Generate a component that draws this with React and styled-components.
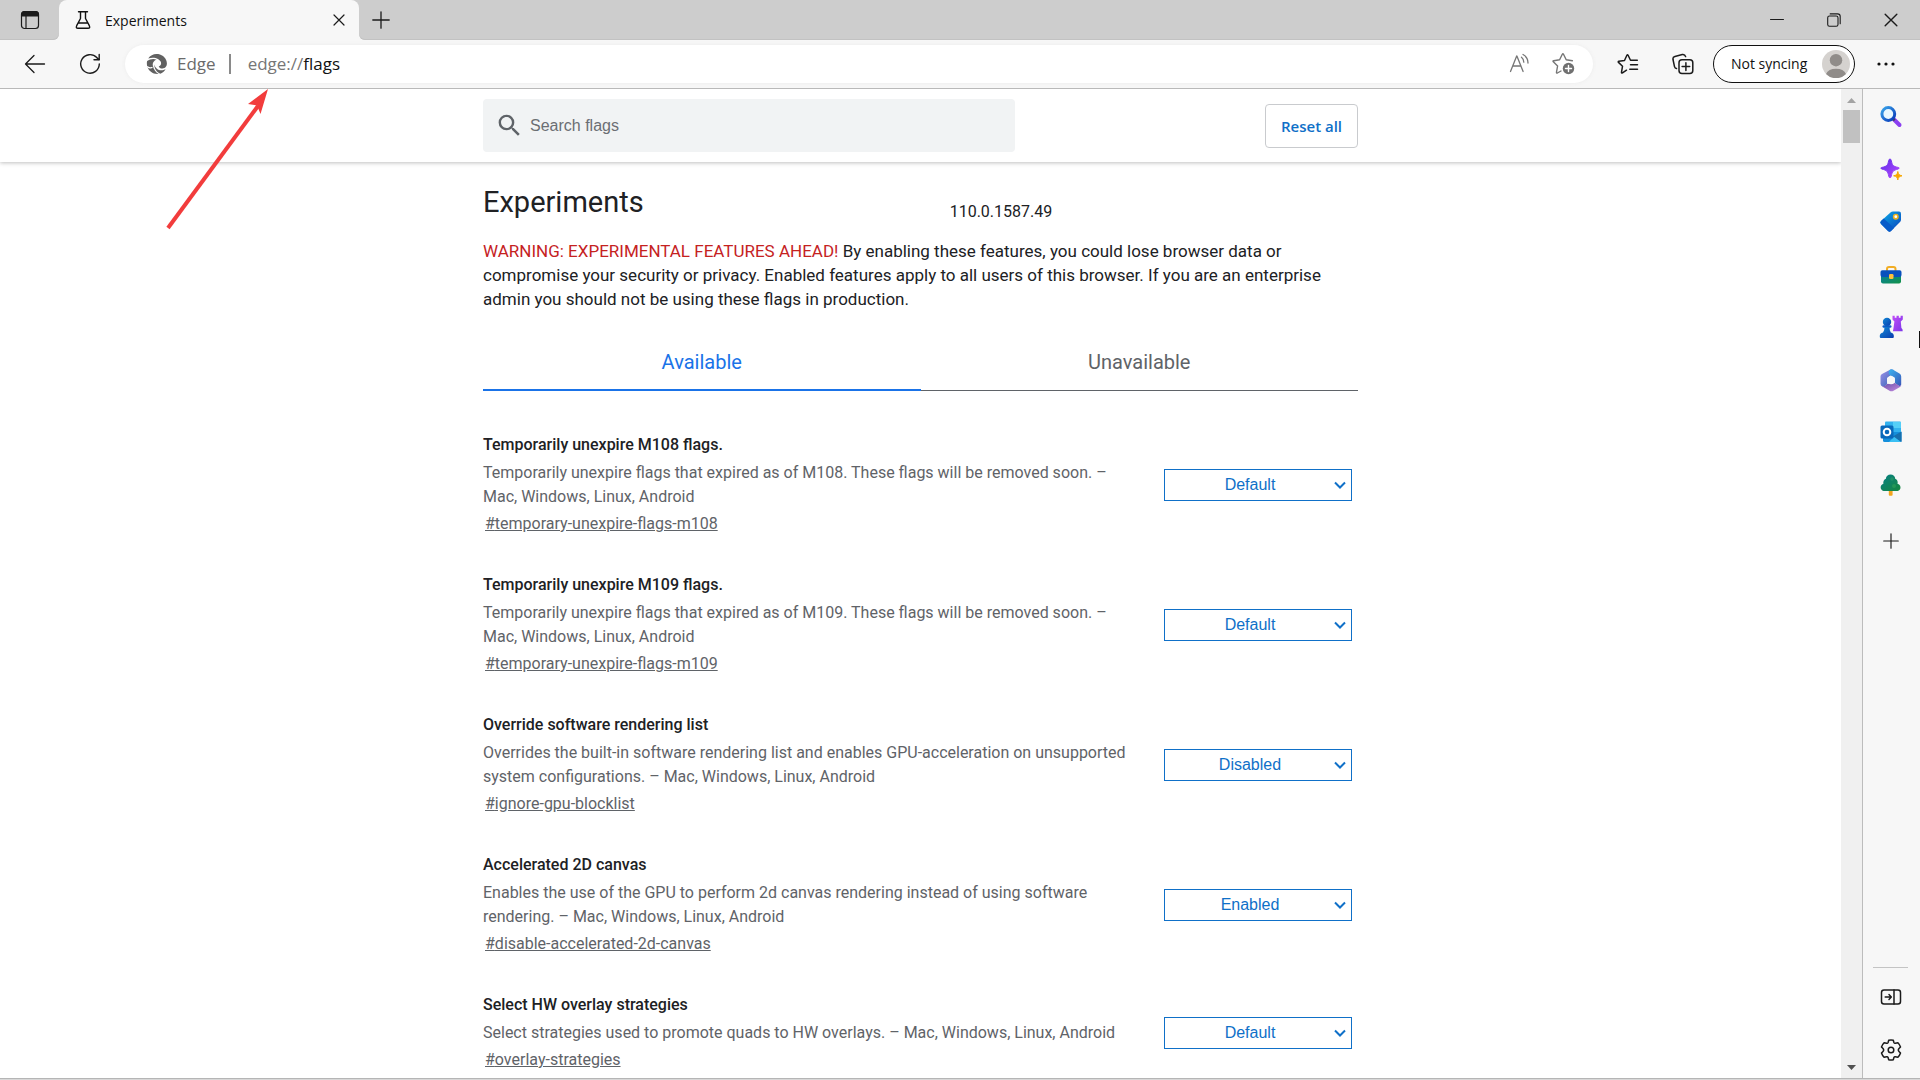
import React, { useState } from "react"
import styled, { createGlobalStyle } from "styled-components";
import { MdSearch } from "react-icons/md";

const GlobalStyle = createGlobalStyle`
* {
box-sizing: border-box;
}
body {
margin: 0;
overflow: hidden;
background: #fff;
color: #202124;
font-family: Roboto, "Liberation Sans", sans-serif;
}
button, input, select {
font: inherit;
color: inherit;
}
h1, h2, p {
margin: 0;
font-weight: 400;
}
`
const Window = styled.div`
position: relative;
height: 100vh;
display: flex;
flex-direction: column;
background: #f7f7f7;
border-bottom: 1px solid #d8d8d8;
`
const TabStrip = styled.div`
display: flex;
height: 40px;
color: #111;
font-family: "Open Sans", "Noto Sans", sans-serif;
`
const StripStart = styled.div`
width: 59px;
display: flex;
align-items: center;
justify-content: center;
background: #cdcdcd;
border-radius: 0 0 6px 0;
box-shadow: inset 0 -1px 0 #c2c2c2;
`
const TabShell = styled.div`
width: 300px;
display: flex;
background: linear-gradient(#cdcdcd 12px, #f7f7f7 12px);
`
const BrowserTab = styled.div`
flex: 1;
display: flex;
align-items: center;
gap: 12px;
padding: 0 8px 0 14px;
background: #f7f7f7;
border-radius: 8px 8px 0 0;
font-size: 14px;
`
const BrowserTabTitle = styled.span`
flex: 1;
`
const StripEnd = styled.div`
flex: 1;
display: flex;
align-items: center;
padding: 0 1px 0 10px;
background: #cdcdcd;
border-radius: 0 0 0 6px;
box-shadow: inset 0 -1px 0 #c2c2c2;
`
const WindowButtons = styled.div`
display: flex;
margin-left: auto;
`
const IconButton = styled.button`
display: flex;
align-items: center;
justify-content: center;
flex: none;
width: ${(props) => props.$width || 24}px;
height: ${(props) => props.$height || 24}px;
padding: 0;
border: none;
background: none;
color: ${(props) => props.$color || "#1b1b1b"};
`
const Toolbar = styled.div`
display: flex;
align-items: center;
height: 49px;
padding: 5px 4px 6px 7px;
border-bottom: 1px solid #b9b9b9;
font-family: "Open Sans", "Noto Sans", sans-serif;
`
const AddressBar = styled.div`
flex: 1;
display: flex;
align-items: center;
height: 38px;
margin: 0 7px 0 8px;
padding: 0 7px 0 21px;
background: #fff;
border-radius: 19px;
box-shadow: 0 0 4px #ececec;
font-size: 17px;
`
const SiteBadge = styled.div`
display: flex;
align-items: center;
gap: 9px;
padding-right: 13px;
color: #6b6b6b;
`
const SiteDivider = styled.div`
width: 2px;
height: 20px;
margin-right: 17px;
background: #8a8a8a;
`
const Url = styled.div`
flex: 1;
color: #767676;
`
const UrlPath = styled.span`
color: #111;
`
const ProfileButton = styled.button`
display: flex;
align-items: center;
justify-content: space-between;
width: 142px;
height: 38px;
margin-left: 3px;
padding: 0 4px 0 17px;
border: 1px solid #111;
border-radius: 19px;
background: #fff;
color: #111;
font-size: 14px;
white-space: nowrap;
`
const Main = styled.div`
flex: 1;
min-height: 0;
display: flex;
border-bottom: 1px solid #b5b5b5;
`
const Page = styled.main`
flex: 1;
background: #fff;
overflow: hidden;
`
const PageHeader = styled.div`
display: flex;
justify-content: center;
height: 73px;
box-shadow: 0 1px 4px rgba(0, 0, 0, 0.25);
`
const HeaderInner = styled.div`
display: flex;
align-items: center;
justify-content: space-between;
width: 875px;
`
const SearchBox = styled.label`
display: flex;
align-items: center;
gap: 4px;
width: 532px;
height: 53px;
padding-left: 12px;
background: #f1f3f4;
border-radius: 4px;
color: #5f6368;
`
const SearchInput = styled.input`
flex: 1;
border: none;
outline: none;
background: none;
font-family: "Liberation Sans", Arial, sans-serif;
font-size: 16px;
&::placeholder {
color: #6b6e73;
opacity: 1;
}
`
const ResetButton = styled.button`
width: 93px;
height: 44px;
padding: 0;
background: #fff;
border: 1px solid #c9cbce;
border-radius: 4px;
color: #0f70c8;
font-family: "Open Sans", "Noto Sans", sans-serif;
font-size: 15px;
font-weight: 600;
`
const Content = styled.div`
width: 875px;
margin: 0 auto;
padding-top: 20px;
`
const TitleRow = styled.div`
display: grid;
grid-template-columns: 8fr 7fr;
align-items: end;
`
const Title = styled.h1`
font-size: 29px;
line-height: 40px;
`
const Version = styled.span`
font-size: 16px;
line-height: 20px;
`
const Blurb = styled.p`
margin-top: 17px;
font-size: 17px;
line-height: 24px;
`
const Warning = styled.span`
color: #c5221f;
`
const Tabs = styled.div`
display: flex;
margin: 21px 0 42px;
`
const Tab = styled.button`
flex: 1;
height: 59px;
padding: 0;
border: none;
background: none;
box-shadow: inset 0 ${(props) => (props.$selected ? "-2px" : "-1px")} 0 ${(props) => (props.$selected ? "#1a73e8" : "#5f6368")};
color: ${(props) => (props.$selected ? "#1a73e8" : "#5f6368")};
font-size: 20px;
`
const FlagList = styled.div`
display: flex;
flex-direction: column;
gap: 37px;
`
const Flag = styled.div`
display: flex;
align-items: center;
justify-content: space-between;
padding-right: 6px;
`
const FlagText = styled.div`
width: 656px;
font-size: 16px;
line-height: 24px;
`
const FlagName = styled.h2`
font-size: 16px;
font-weight: 500;
line-height: 24px;
`
const FlagDescription = styled.p`
margin: 4px 0 3px;
color: #5f6368;
`
const FlagLink = styled.a`
margin-left: 2px;
color: #5f6368;
`
const SelectBox = styled.div`
display: grid;
align-items: center;
width: 188px;
color: #0f70c8;
& > * {
grid-area: 1 / 1;
}
& > svg {
justify-self: end;
margin-right: 6px;
pointer-events: none;
}
`
const Select = styled.select`
width: 100%;
height: 32px;
padding: 0 16px 0 0;
appearance: none;
background: #fff;
border: 1px solid #0f70c8;
border-radius: 0;
font-family: "Liberation Sans", Arial, sans-serif;
font-size: 16px;
text-align: center;
text-align-last: center;
`
const ScrollTrack = styled.div`
display: flex;
flex-direction: column;
align-items: center;
justify-content: space-between;
width: 21px;
padding: 9px 0 8px;
background: #f0f0f0;
`
const ScrollTop = styled.div`
display: flex;
flex-direction: column;
align-items: center;
gap: 7px;
`
const ScrollThumb = styled.div`
width: 17px;
height: 33px;
background: #c1c1c1;
`
const Sidebar = styled.aside`
display: flex;
flex-direction: column;
align-items: center;
width: 58px;
padding: 2px 2px 2px 0;
border-left: 1px solid #bcbcbc;
`
const SidebarApps = styled.nav`
display: grid;
grid-template-rows: repeat(8, 1fr);
height: 420px;
`
const SidebarBottom = styled.div`
display: flex;
flex-direction: column;
align-items: center;
width: 35px;
margin-top: auto;
padding-top: 2px;
border-top: 1px solid #c4c4c4;
`
const Pointer = styled.svg`
position: absolute;
left: 160px;
top: 84px;
pointer-events: none;
`
const Caret = styled.div`
position: absolute;
right: 0;
top: 331px;
width: 1px;
height: 17px;
background: #111;
`

const Svg = ({ size = 20, box, children, ...rest }) => (
    <svg width={size} height={size} viewBox={`0 0 ${box || size} ${box || size}`} fill="none" stroke="currentColor"
        strokeLinecap="round" strokeLinejoin="round" aria-hidden="true" {...rest}>
        {children}
    </svg>
)

const TabMenuIcon = () => (
    <Svg>
        <rect x="1.5" y="1.5" width="17" height="17" rx="3" strokeWidth="1.2" />
        <path d="M1 6.5V4.5A3.5 3.5 0 0 1 4.500 1h11A3.500 3.500 0 0 1 19 4.500v2z" fill="currentColor" stroke="none" />
        <path d="M6 6v12.500" strokeWidth="1.2" />
    </Svg>
)
const FlaskIcon = () => (
    <Svg strokeWidth="1.4">
        <path d="M5.500 1.700h9M7.500 2v6.500L3.700 15.700q-1.200 2.600 1.300 2.600h10q2.500 0 1.300-2.600L12.500 8.500V2M5.300 13h9.400" />
    </Svg>
)
const CloseIcon = ({ size = 12 }) => (
    <Svg size={size} box={12} strokeWidth="1.2"><path d="M1 1l10 10M11 1L1 11" /></Svg>
)
const PlusIcon = ({ size = 18 }) => (
    <Svg size={size} box={18} strokeWidth="1.3"><path d="M9 .8v16.400M.8 9h16.400" /></Svg>
)
const MinimizeIcon = () => <Svg size={14} strokeWidth="1"><path d="M.5 6.500h13" /></Svg>
const RestoreIcon = () => (
    <Svg size={14} strokeWidth="1.1">
        <rect x=".7" y="3" width="10.300" height="10.300" rx="1.8" />
        <path d="M3.200 .9h7.300a2.700 2.700 0 0 1 2.700 2.700v7.200" />
    </Svg>
)
const BackIcon = () => (
    <Svg size={22} strokeWidth="1.3"><path d="M20.500 11H1.500M10 2.500L1.500 11l8.500 8.500" /></Svg>
)
const RefreshIcon = () => (
    <Svg size={22} strokeWidth="1.4">
        <path d="M20.300 11A9.300 9.300 0 1 1 17.800 4.600L20.100 6.600" />
        <path d="M20.200 1.500v5.200h-5.200" />
    </Svg>
)
const EdgeIcon = () => (
    <svg width="22" height="22" viewBox="0 0 22 22" fill="#616161" aria-hidden="true">
        <path d="M2.200 5.600C4.500 1.800 8.500.4 12.200 1.100c4.800.8 8.600 4.700 8.700 9.200.1 3.200-2 5.300-4.600 5.200-1.800-.1-3.100-.9-3.600-2.100 2-.4 2.900-2.400 2.200-4.400C13.700 5.700 7.600 3.200 2.200 5.600z" />
        <path d="M1.100 8.100C4 5.700 8.300 5.400 10.600 6.800 8 7.400 6.300 9.900 6.900 12.900c.6 3.600 3.100 6.500 5.800 8.100C7.200 21.600 2.600 18.300 1.300 13.600.8 11.700.7 9.800 1.100 8.100z" />
        <path d="M8.400 11.500c.8 3.900 4.300 6.300 8.200 5.700 1.200-.2 2.300-.7 3-1.300-1.200 2.400-3.200 4-5.300 4.800-3.600-1.400-6.200-5.300-5.900-9.200z" />
        <path d="M1.200 13.500C3 15 5 15.100 6.500 14.300" stroke="#fff" strokeWidth="1.300" fill="none" />
    </svg>
)
const ReadAloudIcon = () => (
    <Svg size={22} strokeWidth="1.3">
        <path d="M1.500 18.500L7.700 3h.2l6.200 15.500M3.700 13h8.300" />
        <path d="M12.500 4.200q2.300 1.800 2.300 5M14 1.500q5 2.800 5 8.500" />
    </Svg>
)
const AddFavoriteIcon = () => (
    <Svg size={24} strokeWidth="1.4">
        <path d="M9 19l-3.600 2q-1.100.5-.9-.8l1.100-6.200L1.300 9.800q-.8-.9.400-1.100L7.600 7.800 10.300 2.300q.6-1 1.200 0L14.200 7.800l6.200.9" />
        <circle cx="16.500" cy="16.500" r="5.700" fill="#707070" stroke="none" />
        <path d="M16.500 13.500v6M13.500 16.500h6" stroke="#fff" />
    </Svg>
)
const FavoritesIcon = () => (
    <Svg size={22} strokeWidth="1.5">
        <path d="M9.500 17.200l-4 2.700q-1.200.5-1-.8l1-5.800L1.500 9.400q-.8-.9.400-1.100l5.600-.8L9.900 2.300q.6-1 1.200 0L13.500 7.300h6.800M13.500 11.800h7M12.800 16.300h7.700" />
    </Svg>
)
const CollectionsIcon = () => (
    <Svg size={22} strokeWidth="1.5">
        <path d="M4.500 15.600q-1.500-.3-2-2L1 6.500q-.4-2.500 1.900-3.100L10.300 1.500q2.600-.4 3.300 2.100" />
        <rect x="7" y="6.700" width="13.800" height="13.800" rx="3" />
        <path d="M13.900 9.800v7.600M10.100 13.600h7.600" />
    </Svg>
)
const Avatar = () => (
    <svg width="28" height="28" viewBox="0 0 28 28" aria-hidden="true">
        <circle cx="14" cy="14" r="14" fill="#d5d2cf" />
        <circle cx="14" cy="10.200" r="6.200" fill="#908c89" />
        <path d="M4 24a10.500 7.500 0 0 1 20 0A14 14 0 0 1 4 24z" fill="#908c89" />
    </svg>
)
const MoreIcon = () => (
    <svg width="18" height="4" fill="#111" aria-hidden="true">
        <circle cx="2" cy="2" r="1.600" /><circle cx="9" cy="2" r="1.600" /><circle cx="16" cy="2" r="1.600" />
    </svg>
)
const ChevronIcon = () => (
    <Svg size={12} strokeWidth="2" strokeLinecap="butt" strokeLinejoin="miter"><path d="M1 3.500l5 5 5-5" /></Svg>
)

const Gradient = ({ id, from, to }) => (
    <linearGradient id={id} x1="0" y1="0" x2="1" y2="1">
        <stop offset="0" stopColor={from} />
        <stop offset="1" stopColor={to} />
    </linearGradient>
)
const AppSvg = ({ children }) => (
    <svg width="24" height="24" viewBox="0 0 24 24" aria-hidden="true">{children}</svg>
)
const SearchApp = () => (
    <AppSvg>
        <defs><Gradient id="lens" from="#3aa5ea" to="#0737b8" /></defs>
        <path d="M14.500 14l6 6" stroke="#8b3ff0" strokeWidth="4" strokeLinecap="round" />
        <path d="M13.500 13.200l2.200 2.200" stroke="#414455" strokeWidth="2.400" />
        <circle cx="9.300" cy="9" r="6.400" fill="#e8f8ff" stroke="url(#lens)" strokeWidth="3" />
    </AppSvg>
)
const DiscoverApp = () => (
    <AppSvg>
        <defs><Gradient id="spark" from="#5b2be8" to="#b84bff" /></defs>
        <path d="M11 1q1 0 1.300 1.500c1 5 1.800 5.800 6.700 6.900q2.500.6 0 1.700c-4.900 1.300-5.700 2-6.700 7q-.4 1.700-1.300 1.700T9.700 18.100c-1-5-1.800-5.700-6.700-7q-2.500-.9 0-1.700c4.900-1.100 5.700-1.900 6.700-6.900Q10 1 11 1z" fill="url(#spark)" stroke="url(#spark)" strokeLinejoin="round" />
        <path d="M18.800 13.500c.6 3 1.200 3.600 4.200 4.300-3 .7-3.600 1.300-4.200 4.200-.6-2.900-1.200-3.500-4.200-4.200 3-.7 3.600-1.300 4.200-4.300z" fill="#f8a800" stroke="#f8a800" strokeLinejoin="round" />
    </AppSvg>
)
const ShoppingApp = () => (
    <AppSvg>
        <defs><Gradient id="tag" from="#0bb0e8" to="#0a3fbb" /></defs>
        <path d="M11.500 2.400Q12.500 1.500 14 1.500h6Q22 1.500 22 3.500v6q0 1.500-1 2.500l-9 9q-1.500 1.500-3 0L2 14q-1.500-1.500 0-3z" fill="url(#tag)" />
        <path d="M2 11q-1.500 1.500 0 3l7 7q1.500 1.500 3 0l3-3L4.700 8.400z" fill="#075bc9" />
        <circle cx="16.800" cy="6.700" r="2.200" fill="#fff" stroke="#e9b020" strokeWidth="1.600" />
    </AppSvg>
)
const ToolsApp = () => (
    <AppSvg>
        <defs><Gradient id="tools" from="#087fa0" to="#139348" /></defs>
        <path d="M8 8V6Q8 4 10 4h4.500q2 0 2 2v2" fill="none" stroke="#f1ad25" strokeWidth="2" />
        <rect x="2" y="10" width="20" height="10.500" rx="2" fill="url(#tools)" />
        <path d="M1.500 9q0-1.800 1.800-1.800h17.400q1.800 0 1.800 1.800v3q0 2-2 2h-17q-2 0-2-2z" fill="#0a50bd" />
        <rect x="10" y="11" width="4.500" height="5" rx="1.300" fill="#ffc13a" />
    </AppSvg>
)
const GamesApp = () => (
    <AppSvg>
        <defs>
            <Gradient id="pawn" from="#1189d7" to="#0a3cae" />
            <Gradient id="rook" from="#c04cf8" to="#7d36e8" />
        </defs>
        <path d="M13.500 .8h2.200V2.800h1.800V.8h2.300V2.800h1.800V.8H23.800V4.500l-2 2 .6 6.500q1.500.8 1.300 3.200h-9.800L14.500 13l.9-6.500-1.900-2z" fill="url(#rook)" />
        <circle cx="8" cy="7" r="4.200" fill="url(#pawn)" />
        <rect x="3.500" y="10.300" width="9" height="2.400" rx="1.200" fill="#0d5cc6" />
        <path d="M5.500 12h5q0 4 1.300 5.500 3 .8 3 3.300v1.200q0 1-1 1H1.800q-1 0-1-1v-1.200q0-2.500 3.200-3.300Q5.500 16 5.500 12z" fill="url(#pawn)" />
    </AppSvg>
)
const OfficeApp = () => (
    <AppSvg>
        <defs>
            <Gradient id="office1" from="#a092e8" to="#2f62b8" />
            <Gradient id="office2" from="#3cb4f0" to="#3a56b8" />
            <Gradient id="office3" from="#6a4fa8" to="#c58be0" />
        </defs>
        <path d="M12 1.300L3 6Q1.500 6.800 1.500 8.500v7.200q0 2 2 2.800 3.500.5 4.600-2.400L8 10l4.800-3.500L15 2z" fill="url(#office1)" />
        <path d="M10.500 2Q12.500.6 14.500 2l6 3.600q1.700 1 1.700 3v8q-.6 2.500-3 .9L15.800 15V9.700L10 6.500q-1-3 .5-4.500z" fill="url(#office2)" />
        <path d="M3 18.200q3.500.8 5-2.200l7.800-1 4.400 2.700q1.800.7 2-1.200.2 1.700-1.200 2.500l-6.500 3.700q-2 1-4 0z" fill="url(#office3)" />
        <circle cx="12" cy="12.200" r="4" fill="#f7f7f7" />
    </AppSvg>
)
const OutlookApp = () => (
    <AppSvg>
        <path d="M6 2.500Q6 1.500 7 1.500h14q1 0 1 1V13H6z" fill="#32b2ef" />
        <path d="M14 2h8v6h-8z" fill="#55cff8" />
        <path d="M4 12h18.500v8.800q0 1.200-1.200 1.200H5.500Q4 22 4 20.500z" fill="#148fdb" />
        <path d="M22.500 11.500L13 17l9.500 5z" fill="#176fad" />
        <path d="M10 22l5-5.200 7 5.200z" fill="#3ac0f4" />
        <rect x="1.500" y="5.500" width="13" height="13" rx="1.500" fill="#0969bb" />
        <circle cx="8" cy="12" r="3.300" fill="none" stroke="#fff" strokeWidth="2" />
    </AppSvg>
)
const TreeApp = () => (
    <AppSvg>
        <defs><Gradient id="tree" from="#077f86" to="#16883e" /></defs>
        <rect x="9.800" y="16" width="3.800" height="6.800" rx="1" fill="#f2a51e" />
        <path d="M11.600 1.500c2.500 0 4.600 1.800 4.600 4.200 2 .8 3 3 2.300 5 2.600.8 3.500 3 2.800 5-.6 1.800-2 2.300-4 2.300H6c-2 0-3.700-.9-4.200-2.600-.6-2 .6-4 2.600-4.700-.5-2 .5-4.200 2.500-5C6.900 3.300 9 1.500 11.600 1.500z" fill="url(#tree)" />
        <circle cx="13" cy="6" r="1.800" fill="#37a06b" opacity=".5" />
        <circle cx="15" cy="13" r="2" fill="#37a85b" opacity=".5" />
    </AppSvg>
)
const PanelIcon = () => (
    <Svg size={22} strokeWidth="1.500">
        <rect x="1.500" y="4" width="19" height="14" rx="2.500" />
        <path d="M14 4v14M5.200 11h6M9 8.600l2.300 2.400L9 13.400" />
    </Svg>
)
const GearIcon = () => (
    <Svg size={22} strokeWidth="1.500">
        <path d="M8.700 1.300Q11 .6 13.300 1.300L13.900 3.500Q14.300 4.400 15.400 4.200L17.900 3.700Q19.700 5.500 20.500 8L19 9.600Q17.700 11 19 12.400L20.500 14Q19.700 16.500 17.900 18.300L15.400 17.800Q14.300 17.600 13.900 18.500L13.300 20.700Q11 21.400 8.700 20.700L8.100 18.500Q7.700 17.600 6.600 17.800L4.100 18.300Q2.300 16.500 1.500 14L3 12.400Q4.300 11 3 9.600L1.500 8Q2.300 5.500 4.100 3.700L6.600 4.200Q7.700 4.400 8.100 3.500z" />
        <circle cx="11" cy="11" r="2.800" />
    </Svg>
)

const apps = [
    ["Search", SearchApp],
    ["Discover", DiscoverApp],
    ["Shopping", ShoppingApp],
    ["Tools", ToolsApp],
    ["Games", GamesApp],
    ["Microsoft 365", OfficeApp],
    ["Outlook", OutlookApp],
    ["Drop", TreeApp],
]

const flags = [
    {
        id: "temporary-unexpire-flags-m108",
        name: "Temporarily unexpire M108 flags.",
        description: "Temporarily unexpire flags that expired as of M108. These flags will be removed soon. – Mac, Windows, Linux, Android",
        value: "Default"
    },
    {
        id: "temporary-unexpire-flags-m109",
        name: "Temporarily unexpire M109 flags.",
        description: "Temporarily unexpire flags that expired as of M109. These flags will be removed soon. – Mac, Windows, Linux, Android",
        value: "Default"
    },
    {
        id: "ignore-gpu-blocklist",
        name: "Override software rendering list",
        description: "Overrides the built-in software rendering list and enables GPU-acceleration on unsupported system configurations. – Mac, Windows, Linux, Android",
        value: "Disabled"
    },
    {
        id: "disable-accelerated-2d-canvas",
        name: "Accelerated 2D canvas",
        description: "Enables the use of the GPU to perform 2d canvas rendering instead of using software rendering. – Mac, Windows, Linux, Android",
        value: "Enabled"
    },
    {
        id: "overlay-strategies",
        name: "Select HW overlay strategies",
        description: "Select strategies used to promote quads to HW overlays. – Mac, Windows, Linux, Android",
        value: "Default"
    },
]

function FlagRow({ flag }) {
    const [value, setValue] = useState(flag.value)
    return (
        <Flag id={flag.id}>
            <FlagText>
                <FlagName>{flag.name}</FlagName>
                <FlagDescription>{flag.description}</FlagDescription>
                <FlagLink href={`#${flag.id}`}>#{flag.id}</FlagLink>
            </FlagText>
            <SelectBox>
                <Select aria-label={flag.name} value={value} onChange={(e) => setValue(e.target.value)}>
                    <option>Default</option>
                    <option>Enabled</option>
                    <option>Disabled</option>
                </Select>
                <ChevronIcon />
            </SelectBox>
        </Flag>
    )
}

function App() {
    const [tab, setTab] = useState("Available")
    const [search, setSearch] = useState("")
    const shown = flags.filter((e) => e.name.toLowerCase().includes(search.toLowerCase()))
    return (
        <>
            <GlobalStyle />
            <Window>
                <TabStrip>
                    <StripStart>
                        <IconButton aria-label="Tab actions menu"><TabMenuIcon /></IconButton>
                    </StripStart>
                    <TabShell>
                        <BrowserTab>
                            <FlaskIcon />
                            <BrowserTabTitle>Experiments</BrowserTabTitle>
                            <IconButton aria-label="Close tab"><CloseIcon /></IconButton>
                        </BrowserTab>
                    </TabShell>
                    <StripEnd>
                        <IconButton aria-label="New tab"><PlusIcon /></IconButton>
                        <WindowButtons>
                            <IconButton $width={57} aria-label="Minimize"><MinimizeIcon /></IconButton>
                            <IconButton $width={57} aria-label="Restore"><RestoreIcon /></IconButton>
                            <IconButton $width={57} aria-label="Close"><CloseIcon size={14} /></IconButton>
                        </WindowButtons>
                    </StripEnd>
                </TabStrip>
                <Toolbar>
                    <IconButton $width={55} aria-label="Back"><BackIcon /></IconButton>
                    <IconButton $width={55} aria-label="Refresh"><RefreshIcon /></IconButton>
                    <AddressBar>
                        <SiteBadge><EdgeIcon />Edge</SiteBadge>
                        <SiteDivider />
                        <Url>edge://<UrlPath>flags</UrlPath></Url>
                        <IconButton $width={44} $color="#767676" aria-label="Read aloud"><ReadAloudIcon /></IconButton>
                        <IconButton $width={44} $color="#767676" aria-label="Add this page to favorites"><AddFavoriteIcon /></IconButton>
                    </AddressBar>
                    <IconButton $width={55} aria-label="Favorites"><FavoritesIcon /></IconButton>
                    <IconButton $width={55} aria-label="Collections"><CollectionsIcon /></IconButton>
                    <ProfileButton>Not syncing<Avatar /></ProfileButton>
                    <IconButton $width={61} aria-label="Settings and more"><MoreIcon /></IconButton>
                </Toolbar>
                <Main>
                    <Page>
                        <PageHeader>
                            <HeaderInner>
                                <SearchBox>
                                    <MdSearch size={29} />
                                    <SearchInput
                                        aria-label="Search flags"
                                        placeholder="Search flags"
                                        value={search}
                                        onChange={(e) => setSearch(e.target.value)}
                                    />
                                </SearchBox>
                                <ResetButton onClick={() => setSearch("")}>Reset all</ResetButton>
                            </HeaderInner>
                        </PageHeader>
                        <Content>
                            <TitleRow>
                                <Title>Experiments</Title>
                                <Version>110.0.1587.49</Version>
                            </TitleRow>
                            <Blurb>
                                <Warning>WARNING: EXPERIMENTAL FEATURES AHEAD!</Warning> By enabling these features, you could lose browser data or compromise your security or privacy. Enabled features apply to all users of this browser. If you are an enterprise admin you should not be using these flags in production.
                            </Blurb>
                            <Tabs role="tablist">
                                {
                                    ["Available", "Unavailable"].map((e) => (
                                        <Tab key={e} role="tab" aria-selected={tab === e} $selected={tab === e} onClick={() => setTab(e)}>
                                            {e}
                                        </Tab>
                                    ))
                                }
                            </Tabs>
                            <FlagList>
                                {tab === "Available" && shown.map((e) => <FlagRow key={e.id} flag={e} />)}
                            </FlagList>
                        </Content>
                    </Page>
                    <ScrollTrack>
                        <ScrollTop>
                            <svg width="9" height="5" aria-hidden="true"><path d="M0 5l4.500-5L9 5z" fill="#a3a3a3" /></svg>
                            <ScrollThumb />
                        </ScrollTop>
                        <svg width="9" height="5" aria-hidden="true"><path d="M0 0l4.500 5L9 0z" fill="#505050" /></svg>
                    </ScrollTrack>
                    <Sidebar>
                        <SidebarApps>
                            {apps.map(([name, Icon]) => (
                                <IconButton key={name} $width={40} $height={52} aria-label={name}><Icon /></IconButton>
                            ))}
                        </SidebarApps>
                        <IconButton $width={40} $height={60} aria-label="Customize"><PlusIcon size={16} /></IconButton>
                        <SidebarBottom>
                            <IconButton $width={40} $height={53} aria-label="Hide sidebar"><PanelIcon /></IconButton>
                            <IconButton $width={40} $height={53} aria-label="Settings"><GearIcon /></IconButton>
                        </SidebarBottom>
                    </Sidebar>
                </Main>
                {/* red arrow up to the address bar */}
                <Pointer width="120" height="160" fill="#f23c3c" aria-hidden="true">
                    <path d="M8 144L98 22" stroke="#f23c3c" strokeWidth="4" />
                    <path d="M108 5L88 20l9 1.500 3.500 8.500z" />
                </Pointer>
                <Caret />
            </Window>
        </>
    );
}

export default App;
